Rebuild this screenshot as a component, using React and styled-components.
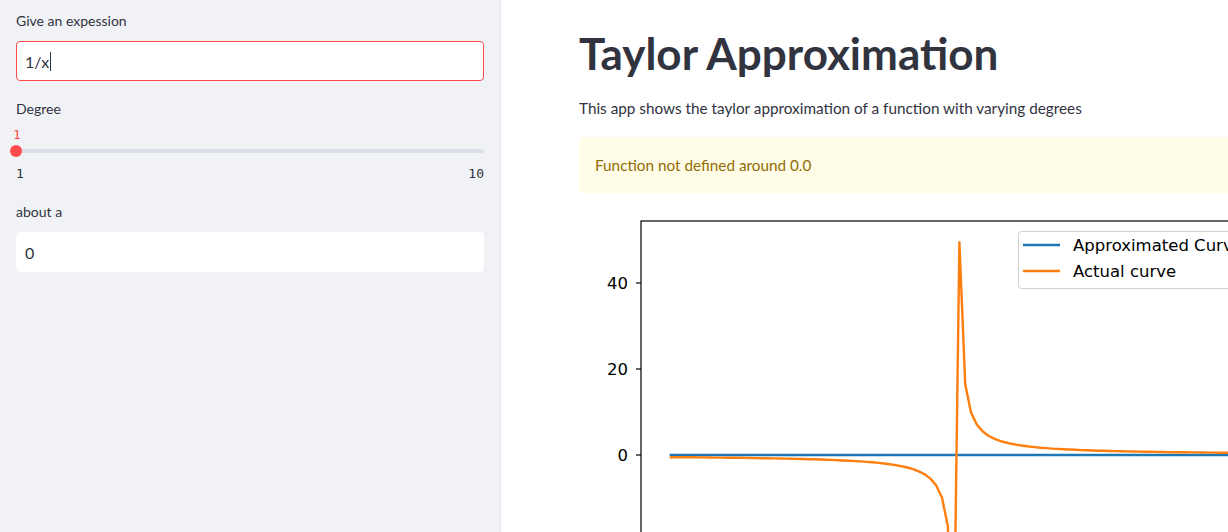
import styled, { createGlobalStyle } from 'styled-components';

const GlobalStyle = createGlobalStyle`
  html, body {
    margin: 0;
    padding: 0;
    background: #ffffff;
  }
  body {
    font-family: Lato, "Noto Sans", sans-serif;
    color: #31333f;
  }
`;

const Layout = styled.div`
  display: flex;
  height: 100vh;
  overflow: hidden;
`;

const Sidebar = styled.aside`
  flex: 0 0 501px;
  box-sizing: border-box;
  background: #f0f2f6;
  border-right: 1px solid #e6e8ee;
  padding: 11px 16px 0 16px;
  display: flex;
  flex-direction: column;
`;

const Field = styled.div`
  display: flex;
  flex-direction: column;
  margin-bottom: ${(p) => p.$gap || 18}px;
`;

const Label = styled.label`
  font-size: 14px;
  line-height: 20px;
  height: 20px;
  margin-bottom: ${(p) => (p.$tight ? 4 : 10)}px;
  color: #31333f;
`;

const TextBox = styled.div`
  box-sizing: border-box;
  height: 40px;
  background: #ffffff;
  border: 1px solid ${(p) => (p.$focused ? '#ff4b4b' : '#ffffff')};
  border-radius: 4px;
  padding: 0 8px;
  display: flex;
  align-items: center;
  font-size: 16px;
  color: #31333f;
`;

const Caret = styled.span`
  display: inline-block;
  width: 1px;
  height: 19px;
  margin-left: 1px;
  background: #31333f;
`;

const SliderValue = styled.div`
  height: 20px;
  line-height: 20px;
  margin-top: 2px;
  font-family: "DejaVu Sans Mono", "Liberation Mono", monospace;
  font-size: 13px;
  color: #ff4b4b;
  margin-left: -3px;
`;

const Track = styled.div`
  position: relative;
  height: 4px;
  margin: 4px 0 5px 0;
  border-radius: 2px;
  background: #dcdfe7;
`;

const Thumb = styled.span`
  position: absolute;
  left: ${(p) => p.$pos}%;
  top: 50%;
  width: 12px;
  height: 12px;
  margin: -6px 0 0 -6px;
  border-radius: 50%;
  background: #ff4b4b;
`;

const TickRow = styled.div`
  display: flex;
  justify-content: space-between;
  margin-top: 6px;
  height: 20px;
  line-height: 20px;
  font-family: "DejaVu Sans Mono", "Liberation Mono", monospace;
  font-size: 13px;
  color: #31333f;
`;

const Main = styled.main`
  flex: 1;
  min-width: 0;
  overflow: hidden;
  padding: 27px 0 0 78px;
`;

const Block = styled.div`
  width: 704px;
`;

const Title = styled.h1`
  margin: 0;
  font-size: 44px;
  line-height: 1.2;
  font-weight: 700;
  color: #31333f;
`;

const Paragraph = styled.p`
  margin: 16px 0 17px 0;
  font-size: 15.3px;
  line-height: 24px;
  color: #31333f;
`;

const Warning = styled.div`
  box-sizing: border-box;
  height: 56px;
  padding: 16px;
  background: #fffce7;
  border-radius: 4px;
  color: #926c05;
  font-size: 15.3px;
  line-height: 24px;
`;

const Figure = styled.svg`
  display: block;
  margin-top: 16px;
`;

const xs = Array.from({ length: 100 }, (_, i) => -2 + (4 * i) / 99);
const px = (x) => 62 + (x + 2.2) * 143.4;
const py = (v) => 246 - v * 4.3;

function Chart() {
  const actual = xs.map((x) => `${px(x).toFixed(1)},${py(1 / x).toFixed(1)}`).join(' ');
  const ticks = [40, 20, 0];
  return (
    <Figure width="704" height="500" viewBox="0 0 704 500">
      <defs>
        <clipPath id="axes">
          <rect x="62" y="12" width="631" height="470" />
        </clipPath>
      </defs>
      <g clipPath="url(#axes)">
        <line x1={px(-2)} y1={py(0)} x2={px(2)} y2={py(0)} stroke="#1f77b4" strokeWidth="2.4" />
        <polyline points={actual} fill="none" stroke="#ff7f0e" strokeWidth="2.4" strokeLinejoin="round" />
      </g>
      <rect x="62" y="12" width="631" height="480" fill="none" stroke="#000" strokeWidth="1.2" />
      {ticks.map((t) => (
        <g key={t}>
          <line x1="57" y1={py(t)} x2="62" y2={py(t)} stroke="#000" strokeWidth="1.2" />
          <text
            x="49"
            y={py(t) + 6}
            textAnchor="end"
            fontFamily="DejaVu Sans, sans-serif"
            fontSize="16.5"
            fill="#000"
          >
            {t}
          </text>
        </g>
      ))}
      <rect x="439.5" y="22.5" width="260" height="57" rx="3" fill="#fff" fillOpacity="0.85" stroke="#d0d0d0" />
      <line x1="444" y1="36" x2="481" y2="36" stroke="#1f77b4" strokeWidth="2.4" />
      <line x1="444" y1="62" x2="481" y2="62" stroke="#ff7f0e" strokeWidth="2.4" />
      <text x="494" y="42" fontFamily="DejaVu Sans, sans-serif" fontSize="16.5" fill="#000">
        Approximated Curve
      </text>
      <text x="494" y="68" fontFamily="DejaVu Sans, sans-serif" fontSize="16.5" fill="#000">
        Actual curve
      </text>
    </Figure>
  );
}

export default function App() {
  return (
    <>
      <GlobalStyle />
      <Layout>
        <Sidebar>
          <Field>
            <Label>Give an expession</Label>
            <TextBox $focused>
              1/x
              <Caret />
            </TextBox>
          </Field>
          <Field $gap={18}>
            <Label $tight>Degree</Label>
            <SliderValue>1</SliderValue>
            <Track>
              <Thumb $pos={0} />
            </Track>
            <TickRow>
              <span>1</span>
              <span>10</span>
            </TickRow>
          </Field>
          <Field>
            <Label>about a</Label>
            <TextBox>0</TextBox>
          </Field>
        </Sidebar>
        <Main>
          <Block>
            <Title>Taylor Approximation</Title>
            <Paragraph>This app shows the taylor approximation of a function with varying degrees</Paragraph>
            <Warning>Function not defined around 0.0</Warning>
            <Chart />
          </Block>
        </Main>
      </Layout>
    </>
  );
}
